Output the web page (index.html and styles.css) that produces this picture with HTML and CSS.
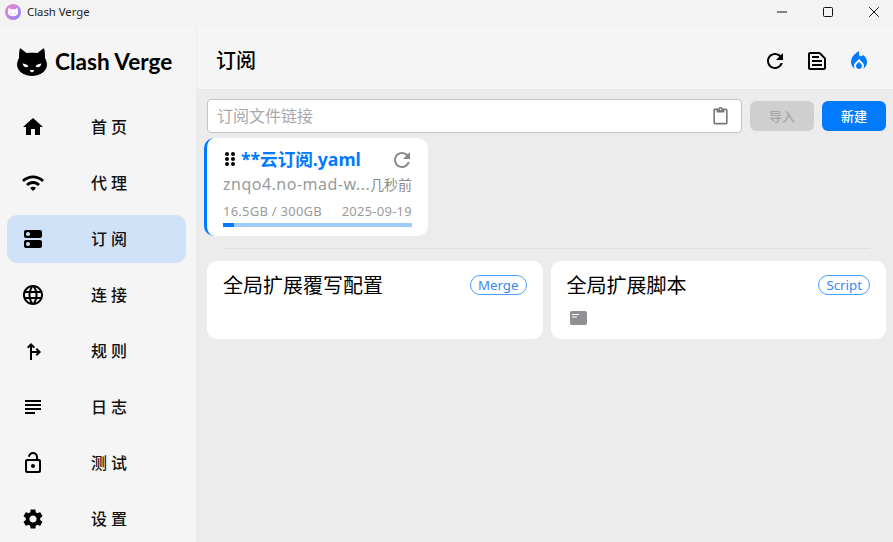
FILE: index.html
```html
<!DOCTYPE html>
<html lang="zh">
<head>
<meta charset="utf-8">
<title>Clash Verge</title>
<link rel="stylesheet" href="styles.css">
</head>
<body>
<div class="titlebar">
  <div class="app-title">
    <svg class="app-icon" viewBox="0 0 16 16"><defs><linearGradient id="g" x1="0" y1="0" x2="1" y2="1"><stop offset="0" stop-color="#f587c8"/><stop offset="1" stop-color="#8f80fa"/></linearGradient></defs><circle cx="8" cy="8" r="8" fill="url(#g)"/><path d="M3.500 3.800 6 5.300h4l2.500-1.500.6 5c0 2.300-2.300 3.400-5.100 3.400S2.900 11.100 2.900 8.800z" fill="#fff"/><path d="M5 8.800l1.500.7M11 8.800l-1.500.7" stroke="#c9a0ee" stroke-width=".9" fill="none"/></svg>
    <span>Clash Verge</span>
  </div>
  <div class="win-controls">
    <svg class="win-btn" viewBox="0 0 12 12"><path d="M1 6h10" stroke="#111" stroke-width="1" fill="none"/></svg>
    <svg class="win-btn" viewBox="0 0 12 12"><rect x="1.500" y="1.500" width="9" height="9" rx="1" stroke="#111" stroke-width="1" fill="none"/></svg>
    <svg class="win-btn" viewBox="0 0 12 12"><path d="M1.200 1.200l9.600 9.600M10.800 1.200l-9.600 9.600" stroke="#111" stroke-width="1" fill="none"/></svg>
  </div>
</div>
<div class="app">
  <aside class="sidebar">
    <div class="logo">
      <svg class="cat" viewBox="0 0 30 28"><path d="M3 0.300C3.800 0.300 8 3.800 9.500 5C12 4.500 18 4.500 20.500 5C22 3.800 26.200 0.300 27 0.300C28 3 28 7.500 28 10C29.400 12.500 30 15 30 17C29.500 24 22 28 15 28S.5 24 0 17C0 15 .6 12.500 2 10C2 7.500 2 3 3 0.300z" fill="#000"/><path d="M5.500 15.500C7.500 15.700 10 16.500 11.500 18C10 20.500 6.500 19.500 5.500 15.500zM24.500 15.500C22.500 15.700 20 16.500 18.500 18C20 20.500 23.500 19.500 24.500 15.500zM12.800 22.200C14 22 16 22 17.200 22.200C16.800 23.500 15.800 24.300 15 24.300S13.200 23.500 12.800 22.200z" fill="#fff"/></svg>
      <span class="logo-text">Clash Verge</span>
    </div>
    <nav class="nav">
      <a class="nav-item"><svg class="nav-icon" viewBox="0 0 24 24"><path d="M10 20v-6h4v6h5v-8h3L12 3 2 12h3v8z"/></svg><span class="nav-label">首页</span></a>
      <a class="nav-item"><svg class="nav-icon" viewBox="0 0 24 24"><path d="M1 9l2 2c4.970-4.970 13.030-4.970 18 0l2-2C16.930 2.930 7.080 2.930 1 9zm8 8l3 3 3-3c-1.650-1.660-4.340-1.660-6 0zm-4-4l2 2c2.760-2.760 7.240-2.760 10 0l2-2C15.140 9.140 8.870 9.140 5 13z"/></svg><span class="nav-label">代理</span></a>
      <a class="nav-item active"><svg class="nav-icon" viewBox="0 0 24 24"><path d="M19 13H5c-1.100 0-2 .9-2 2v4c0 1.100.9 2 2 2h14c1.100 0 2-.9 2-2v-4c0-1.100-.9-2-2-2zM7 19c-1.100 0-2-.9-2-2s.9-2 2-2 2 .9 2 2-.9 2-2 2zM19 3H5c-1.100 0-2 .9-2 2v4c0 1.100.9 2 2 2h14c1.100 0 2-.9 2-2V5c0-1.100-.9-2-2-2zM7 9c-1.100 0-2-.9-2-2s.9-2 2-2 2 .9 2 2-.9 2-2 2z"/></svg><span class="nav-label">订阅</span></a>
      <a class="nav-item"><svg class="nav-icon" viewBox="0 0 24 24"><path d="M11.990 2C6.470 2 2 6.480 2 12s4.470 10 9.990 10C17.520 22 22 17.520 22 12S17.520 2 11.990 2zm6.930 6h-2.950c-.32-1.250-.78-2.450-1.380-3.560 1.840.63 3.370 1.910 4.330 3.560zM12 4.040c.83 1.200 1.480 2.530 1.910 3.960h-3.820c.43-1.430 1.080-2.760 1.910-3.960zM4.260 14C4.100 13.360 4 12.690 4 12s.1-1.360.26-2h3.380c-.08.66-.14 1.320-.14 2 0 .68.06 1.340.14 2H4.260zm.82 2h2.950c.32 1.250.78 2.450 1.380 3.560-1.840-.63-3.370-1.900-4.330-3.560zm2.950-8H5.080c.96-1.660 2.490-2.930 4.330-3.560C8.810 5.550 8.350 6.750 8.030 8zM12 19.960c-.83-1.200-1.480-2.530-1.910-3.960h3.820c-.43 1.430-1.080 2.760-1.910 3.960zM14.340 14H9.660c-.09-.66-.16-1.320-.16-2 0-.68.07-1.350.16-2h4.680c.09.65.16 1.320.16 2 0 .68-.07 1.340-.16 2zm.25 5.560c.6-1.110 1.060-2.310 1.380-3.560h2.950c-.96 1.650-2.490 2.930-4.330 3.560zM16.360 14c.08-.66.14-1.320.14-2 0-.68-.06-1.340-.14-2h3.380c.16.64.26 1.310.26 2s-.1 1.360-.26 2h-3.380z"/></svg><span class="nav-label">连接</span></a>
      <a class="nav-item"><svg class="nav-icon" viewBox="0 0 24 24"><path d="M9 21V7.830L7.410 9.410 6 8l4-4 4 4-1.410 1.410L11 7.830V12h5.170l-1.580-1.590L16 9l4 4-4 4-1.410-1.410L16.170 14H11v7z"/></svg><span class="nav-label">规则</span></a>
      <a class="nav-item"><svg class="nav-icon" viewBox="0 0 24 24"><path d="M14 17H4v2h10v-2zm6-8H4v2h16V9zM4 15h16v-2H4v2zM4 5v2h16V5H4z"/></svg><span class="nav-label">日志</span></a>
      <a class="nav-item"><svg class="nav-icon" viewBox="0 0 24 24"><path d="M12 17c1.100 0 2-.9 2-2s-.9-2-2-2-2 .9-2 2 .9 2 2 2zm6-9h-1V6c0-2.760-2.240-5-5-5-2.280 0-4.270 1.540-4.840 3.750-.14.54.18 1.080.72 1.220.53.14 1.080-.18 1.220-.72C9.440 3.930 10.630 3 12 3c1.650 0 3 1.350 3 3v2H6c-1.100 0-2 .9-2 2v10c0 1.100.9 2 2 2h12c1.100 0 2-.9 2-2V10c0-1.100-.9-2-2-2zm0 11c0 .55-.45 1-1 1H7c-.55 0-1-.45-1-1v-8c0-.55.45-1 1-1h10c.55 0 1 .45 1 1v8z"/></svg><span class="nav-label">测试</span></a>
      <a class="nav-item"><svg class="nav-icon" viewBox="0 0 24 24"><path d="M19.140 12.940c.04-.3.06-.61.06-.94 0-.32-.02-.64-.07-.94l2.030-1.580c.18-.14.23-.41.12-.61l-1.920-3.320c-.12-.22-.37-.29-.59-.22l-2.390.96c-.5-.38-1.030-.7-1.620-.94l-.36-2.540c-.04-.24-.24-.41-.48-.41h-3.840c-.24 0-.43.17-.47.41l-.36 2.540c-.59.24-1.130.57-1.620.94l-2.390-.96c-.22-.08-.47 0-.59.22L2.740 8.870c-.12.21-.08.47.12.61l2.030 1.580c-.05.3-.09.63-.09.94s.02.64.07.94l-2.030 1.580c-.18.14-.23.41-.12.61l1.920 3.320c.12.22.37.29.59.22l2.390-.96c.5.38 1.030.7 1.620.94l.36 2.540c.05.24.24.41.48.41h3.840c.24 0 .44-.17.47-.41l.36-2.540c.59-.24 1.130-.56 1.620-.94l2.390.96c.22.08.47 0 .59-.22l1.920-3.320c.12-.22.07-.47-.12-.61l-2.010-1.580zM12 15.600c-1.980 0-3.600-1.620-3.600-3.600s1.620-3.600 3.600-3.600 3.600 1.620 3.600 3.600-1.620 3.600-3.600 3.600z"/></svg><span class="nav-label">设置</span></a>
    </nav>
  </aside>
  <main class="main">
    <header class="header">
      <h1 class="page-title">订阅</h1>
      <div class="header-actions">
        <svg class="hd-icon" viewBox="0 0 24 24"><path d="M17.650 6.350C16.200 4.900 14.210 4 12 4c-4.420 0-7.990 3.580-7.990 8s3.570 8 7.990 8c3.730 0 6.840-2.550 7.730-6h-2.080c-.82 2.330-3.040 4-5.650 4-3.310 0-6-2.690-6-6s2.690-6 6-6c1.660 0 3.140.69 4.220 1.780L13 11h7V4l-2.350 2.350z"/></svg>
        <svg class="hd-icon" viewBox="0 0 24 24"><path d="M14.170 5 19 9.830V19H5V5h9.170m0-2H5c-1.100 0-2 .9-2 2v14c0 1.100.9 2 2 2h14c1.100 0 2-.9 2-2V9.830c0-.53-.21-1.040-.59-1.410l-4.830-4.830c-.37-.38-.88-.59-1.410-.59zM7 15h10v2H7v-2zm0-4h10v2H7v-2zm0-4h7v2H7V7z"/></svg>
        <svg class="hd-icon fire" viewBox="0 0 24 24"><path d="M12 12.900l-2.130 2.090c-.56.56-.87 1.290-.87 2.070C9 18.680 10.350 20 12 20s3-1.320 3-2.940c0-.78-.31-1.520-.87-2.070L12 12.900z"/><path d="M16 6l-.44.55C14.380 8.020 12 7.190 12 5.300V2S4 6 4 13c0 2.920 1.560 5.470 3.890 6.860-.56-.79-.89-1.760-.89-2.800 0-1.320.52-2.560 1.470-3.500L12 10.100l3.530 3.470c.95.93 1.470 2.170 1.470 3.500 0 1.020-.31 1.960-.85 2.750 1.890-1.150 3.290-3.060 3.710-5.300.66-3.550-1.070-6.900-3.860-8.520z"/></svg>
      </div>
    </header>
    <section class="content">
      <div class="toolbar">
        <div class="url-input">
          <span class="placeholder">订阅文件链接</span>
          <svg class="paste" viewBox="0 0 24 24"><path d="M19 2h-4.180C14.400.84 13.300 0 12 0c-1.300 0-2.400.84-2.820 2H5c-1.100 0-2 .9-2 2v16c0 1.100.9 2 2 2h14c1.100 0 2-.9 2-2V4c0-1.100-.9-2-2-2zm-7 0c.55 0 1 .45 1 1s-.45 1-1 1-1-.45-1-1 .45-1 1-1zm7 18H5V4h2v3h10V4h2v16z"/></svg>
        </div>
        <button class="btn btn-disabled">导入</button>
        <button class="btn btn-primary">新建</button>
      </div>
      <div class="profile-card">
        <div class="pc-row pc-title">
          <svg class="drag" viewBox="0 0 12 16"><circle cx="3" cy="3" r="2"/><circle cx="9" cy="3" r="2"/><circle cx="3" cy="8" r="2"/><circle cx="9" cy="8" r="2"/><circle cx="3" cy="13" r="2"/><circle cx="9" cy="13" r="2"/></svg>
          <span class="pc-name">**云订阅.yaml</span>
          <svg class="pc-refresh" viewBox="0 0 24 24"><path d="M17.650 6.350C16.200 4.900 14.210 4 12 4c-4.420 0-7.990 3.580-7.990 8s3.570 8 7.990 8c3.730 0 6.840-2.550 7.730-6h-2.080c-.82 2.330-3.040 4-5.650 4-3.310 0-6-2.690-6-6s2.690-6 6-6c1.660 0 3.140.69 4.220 1.780L13 11h7V4l-2.350 2.350z"/></svg>
        </div>
        <div class="pc-row pc-host">
          <span class="pc-url">znqo4.no-mad-w...</span>
          <span class="pc-time">几秒前</span>
        </div>
        <div class="pc-row pc-usage">
          <span>16.5GB / 300GB</span>
          <span>2025-09-19</span>
        </div>
        <div class="progress"><div class="progress-fill"></div></div>
      </div>
      <div class="divider"></div>
      <div class="ext-grid">
        <div class="ext-card">
          <div class="ext-head"><span class="ext-title">全局扩展覆写配置</span><span class="chip">Merge</span></div>
        </div>
        <div class="ext-card">
          <div class="ext-head"><span class="ext-title">全局扩展脚本</span><span class="chip">Script</span></div>
          <svg class="ext-icon" viewBox="0 0 17 14"><rect width="17" height="14" rx="2" fill="#8e8e93"/><path d="M2 3.500h7M2 6h5" stroke="#fff" stroke-width="1.200"/></svg>
        </div>
      </div>
    </section>
  </main>
</div>
</body>
</html>
```
FILE: styles.css
```css
* { box-sizing: border-box; }
html, body { margin: 0; height: 100%; overflow: hidden; }
body {
  display: flex;
  flex-direction: column;
  font-family: "Noto Sans", "Noto Sans CJK SC", sans-serif;
  background: #f5f5f5;
  color: #000;
}
.titlebar {
  height: 26px;
  flex: none;
  display: flex;
  align-items: center;
  justify-content: space-between;
  padding-bottom: 3px;
  background: #f3f3f3;
}
.app-title {
  display: flex;
  align-items: center;
  gap: 6px;
  padding-left: 5px;
  font-size: 11.3px;
  color: #222;
}
.app-icon { width: 16px; height: 16px; }
.win-controls { display: flex; gap: 34px; padding-right: 13px; }
.win-btn { width: 12px; height: 12px; }
.app { flex: 1; display: flex; min-height: 0; }
.sidebar {
  width: 197px;
  flex: none;
  background: #f5f5f5;
  border-right: 1px solid #ececec;
  display: flex;
  flex-direction: column;
}
.logo {
  height: 72px;
  flex: none;
  display: flex;
  align-items: center;
  gap: 8px;
  padding: 0 0 0 17px;
}
.cat { width: 30px; height: 28px; }
.logo-text {
  font-family: "Lato", sans-serif;
  font-weight: 700;
  font-size: 22.6px;
  color: #000;
  margin-bottom: 2px;
}
.nav { display: flex; flex-direction: column; gap: 8px; padding: 5px 10px 0 7px; }
.nav-item {
  height: 48px;
  flex: none;
  display: flex;
  align-items: center;
  border-radius: 10px;
  padding-left: 14px;
}
.nav-item.active { background: #cfe2f8; }
.nav-icon { width: 24px; height: 24px; fill: #000; flex: none; }
.nav-label {
  margin-left: 46px;
  margin-bottom: 2px;
  font-size: 16px;
  letter-spacing: 4px;
  font-weight: 500;
  color: #111;
}
.main { flex: 1; display: flex; flex-direction: column; min-width: 0; background: #ececec; }
.header {
  height: 64px;
  flex: none;
  display: flex;
  align-items: center;
  justify-content: space-between;
  padding: 6px 22px 0 19px;
  background: #f5f5f5;
  border-bottom: 1px solid #e6e6e6;
}
.page-title { margin: 0 0 2px; font-size: 20px; font-weight: 500; }
.header-actions { display: flex; gap: 18px; }
.hd-icon { width: 24px; height: 24px; fill: #000; }
.hd-icon.fire { fill: #007aff; }
.content { flex: 1; padding: 9px 7px 0 10px; display: flex; flex-direction: column; }
.toolbar { display: flex; align-items: center; gap: 8px; }
.url-input {
  flex: 1;
  height: 34px;
  background: #fff;
  border: 1px solid #c4c4c4;
  border-radius: 4px;
  display: flex;
  align-items: center;
  justify-content: space-between;
  padding: 0 11px 0 9px;
}
.placeholder { font-size: 16px; color: #a8a8a8; margin-bottom: 2px; }
.paste { width: 19px; height: 19px; fill: #777; }
.btn {
  width: 64px;
  height: 30px;
  border: 0;
  border-radius: 6px;
  padding: 0 0 2px;
  font: 500 13px "Noto Sans", "Noto Sans CJK SC", sans-serif;
}
.btn-disabled { background: #cfcfcf; color: #a6a6a6; }
.btn-primary { background: #007aff; color: #fff; }
.profile-card {
  margin-top: 5px;
  margin-left: -3px;
  width: 224px;
  height: 98px;
  background: #fff;
  border-left: 3px solid #007aff;
  border-radius: 10px;
  padding: 9px 16px 0 16px;
}
.pc-row { display: flex; align-items: center; justify-content: space-between; }
.pc-title { height: 26px; }
.drag { width: 12px; height: 16px; fill: #000; margin-left: 1px; margin-bottom: 2px; flex: none; }
.pc-name {
  flex: 1;
  margin-left: 5px;
  margin-bottom: 4px;
  font-size: 17.6px;
  font-weight: 700;
  color: #007aff;
  white-space: nowrap;
}
.pc-refresh { width: 24px; height: 24px; fill: #8a8a8a; margin-right: -2px; }
.pc-host { height: 24px; color: #9a9a9a; }
.pc-url { font-size: 16px; letter-spacing: .5px; white-space: nowrap; margin-bottom: 2px; overflow: hidden; }
.pc-time { font-size: 14px; color: #8a8a8a; margin-bottom: 2px; white-space: nowrap; flex: none; }
.pc-usage { margin-top: 5px; height: 18px; font-size: 13px; letter-spacing: .25px; color: #9a9a9a; }
.progress { margin-top: 3px; height: 4px; background: #9ecbfc; }
.progress-fill { width: 6%; height: 100%; background: #007aff; }
.divider { margin: 12px 16px 12px 16px; height: 1px; background: #dfdfdf; }
.ext-grid { display: grid; grid-template-columns: 1fr 1fr; gap: 8px; }
.ext-card { height: 78px; background: #fff; border-radius: 10px; padding: 10px 16px; }
.ext-head { display: flex; align-items: center; justify-content: space-between; height: 28px; }
.ext-title { font-size: 20px; font-weight: 400; color: #000; margin-bottom: 2px; }
.chip {
  border: 1px solid #4a9dfb;
  border-radius: 10px;
  font-size: 13.300px;
  line-height: 18px;
  padding: 0 7px;
  color: #3a86f5;
}
.ext-icon { display: block; margin: 12px 0 0 3px; width: 17px; height: 14px; }
```
